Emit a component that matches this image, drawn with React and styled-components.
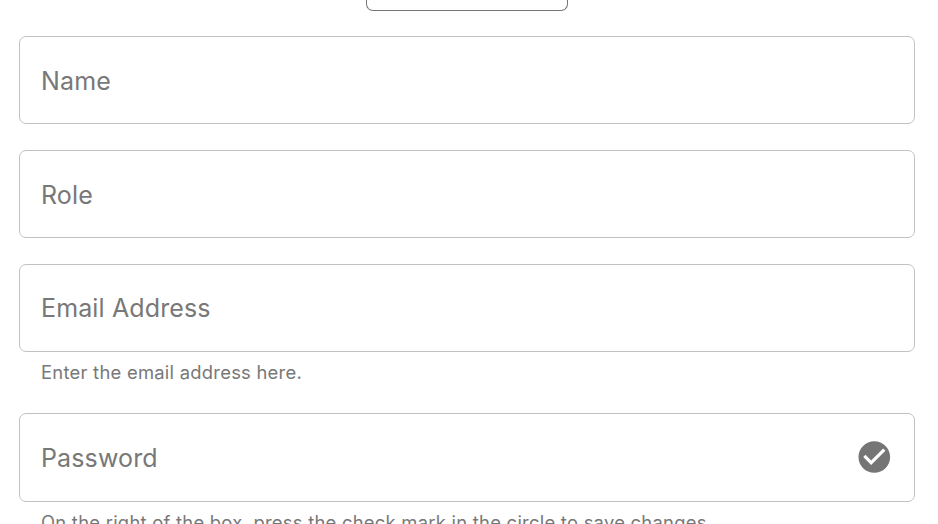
import React from "react";
import styled, { createGlobalStyle } from "styled-components";

const GlobalStyle = createGlobalStyle`
  body { margin: 0; background: #fff; overflow: hidden; }
  * { box-sizing: border-box; }
`;
const Form = styled.form`
  width: 938px;
  height: 524px;
  overflow: hidden;
  display: flex;
  flex-direction: column;
  padding: 0 23px 0 19px;
  font-family: Inter, sans-serif;
  font-weight: 400;
  color: #787878;
`;
const Button = styled.div`
  flex: none;
  width: 202px;
  height: 11px;
  margin: 0 0 25px 347px;
  border: 1px solid #757575;
  border-top: 0;
  border-radius: 0 0 7px 7px;
`;
const Field = styled.div`
  flex: none;
  height: ${(p) => p.$height || 88}px;
  margin-bottom: ${(p) => p.$gap}px;
  padding: 0 23px 0 21px;
  display: flex;
  align-items: center;
  justify-content: space-between;
  border: 1px solid #c2c2c2;
  border-radius: 7px;
`;
const Label = styled.label`
  font-size: 25px;
  line-height: 30px;
  letter-spacing: 0.13px;
  padding: ${(p) => (p.$raised ? "0 0 1px" : "1px 0 0")};
`;
const Helper = styled.p`
  flex: none;
  margin: 0 0 ${(p) => p.$gap || 0}px 22px;
  font-size: 18.4px;
  line-height: 28px;
  letter-spacing: 0.255px;
  white-space: nowrap;
`;
const Icon = styled.svg`
  width: 38px;
  height: 38px;
  margin: 0 -2px 1px 0;
  fill: #757575;
`;

export default function App() {
  return (
    <>
      <GlobalStyle />
      <Form>
        <Button />
        <Field $gap={26}><Label>Name</Label></Field>
        <Field $gap={26}><Label>Role</Label></Field>
        <Field $gap={6}><Label $raised>Email Address</Label></Field>
        <Helper $gap={27}>Enter the email address here.</Helper>
        <Field $height={89} $gap={6}>
          <Label>Password</Label>
          <Icon viewBox="-0.2 0 24 24">
            <path d="M12 2C6.48 2 2 6.48 2 12s4.48 10 10 10 10-4.48 10-10S17.52 2 12 2zm-2 15l-5-5 1.41-1.41L10 14.17l7.59-7.59L19 8l-9 9z" />
          </Icon>
        </Field>
        <Helper>On the right of the box, press the check mark in the circle to save changes.</Helper>
      </Form>
    </>
  );
}
